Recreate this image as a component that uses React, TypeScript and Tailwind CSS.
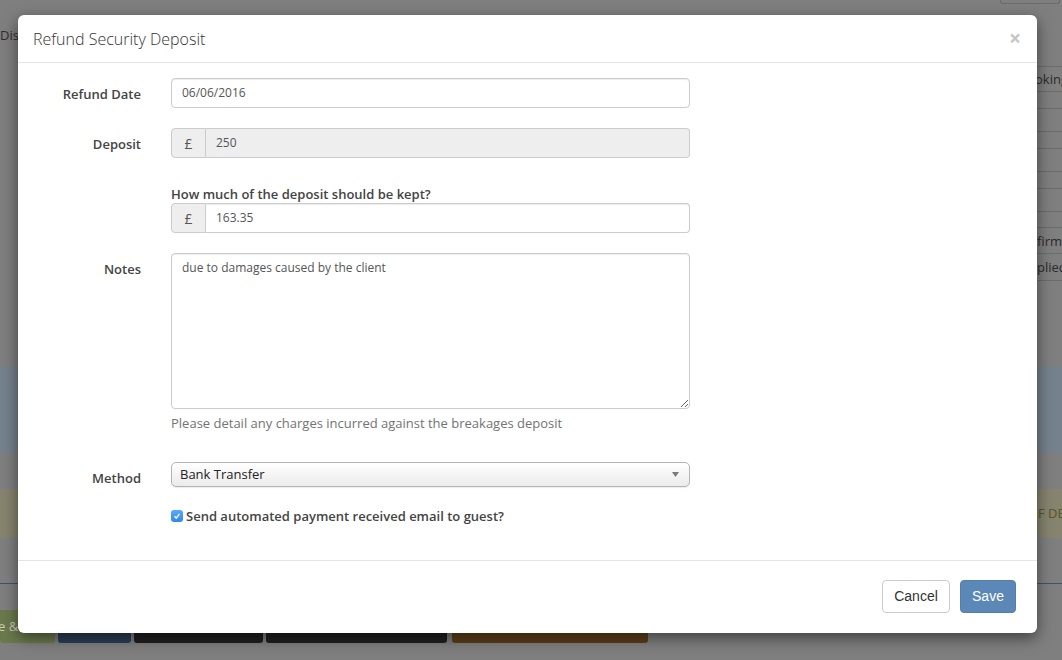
// RefundDepositModal — "Refund Security Deposit" dialog over a dimmed booking page

const sans = "font-['Open_Sans','Noto_Sans',sans-serif]";

function FieldLabel({ children, className = '' }: { children?: React.ReactNode; className?: string }) {
  return (
    <div className={`w-[123px] shrink-0 text-right text-[13px] font-semibold leading-[18px] text-[#444] ${className}`}>
      {children}
    </div>
  );
}

function PoundGroup({ value, disabled }: { value: string; disabled?: boolean }) {
  return (
    <div className="flex h-[30px] w-[519px]">
      <span className="flex w-[35px] items-center justify-center rounded-l-[4px] border border-[#ccc] bg-[#eee] text-[14px] text-[#555]">
        £
      </span>
      <div
        className={`flex flex-1 items-center rounded-r-[4px] border border-l-0 border-[#ccc] px-[10px] text-[12px] text-[#555]
                    ${disabled ? 'bg-[#eee]' : 'bg-white shadow-[inset_0_1px_1px_rgba(0,0,0,0.075)]'}`}
      >
        {value}
      </div>
    </div>
  );
}

function BackgroundPage() {
  return (
    <div className="flex h-full flex-col">
      {/* top strip */}
      <div className="flex h-[60px] flex-col">
        <div className="flex justify-end pr-[2px]">
          <div className="h-[4px] w-[60px] rounded-b-[3px] border border-t-0 border-[#6b6b6b]" />
        </div>
        <div className="mt-[22px] text-[13px] leading-[18px] text-[#2e2e2e]">Disa</div>
      </div>

      {/* right-hand table peeking past the dialog */}
      <div className="flex h-[307px] justify-end">
        <div className="flex w-[27px] flex-col pt-[6px] text-[13px] leading-[18px] text-[#2b2b2b]">
          <div className="flex h-[26px] items-center border-y border-[#6c6c6c]">oking</div>
          <div className="mt-[16px] h-[24px] border-y border-[#6c6c6c]" />
          <div className="mt-[16px] h-[24px] border-y border-[#6c6c6c]" />
          <div className="mt-[16px] h-[24px] border-y border-[#6c6c6c]" />
          <div className="mt-[15px] flex h-[27px] items-center border-y border-[#6c6c6c] pl-[2px]">firm</div>
          <div className="flex h-[27px] items-center border-b border-[#6c6c6c] pl-[2px]">plied</div>
        </div>
      </div>

      <div className="h-[86px] bg-[#75818c]" />
      <div className="h-[36px]" />
      <div className="flex h-[49px] items-center justify-end bg-[#86836f] text-[13px] text-[#5d5526]">
        <span className="w-[24px] overflow-hidden whitespace-nowrap">F DEL</span>
      </div>
      <div className="h-[46px] border-b border-[#3d5573]" />
      <div className="h-[26px]" />

      {/* button bar */}
      <div className="flex h-[33px]">
        <div className="flex w-[55px] items-center rounded-b-[3px] bg-[#6a7a4c] text-[13px] text-[#c9cfbd]">
          <span className="-ml-[2px]">e &amp;</span>
        </div>
        <div className="ml-[3px] w-[73px] rounded-b-[3px] bg-[#2c3f57]" />
        <div className="ml-[3px] w-[129px] rounded-b-[3px] bg-[#202020]" />
        <div className="ml-[3px] w-[181px] rounded-b-[3px] bg-[#202020]" />
        <div className="ml-[5px] w-[196px] rounded-b-[3px] bg-gradient-to-b from-[#6f4d1f] to-[#5a3d17]" />
      </div>
    </div>
  );
}

export default function App() {
  return (
    <div className={`relative h-[660px] w-[1062px] overflow-hidden bg-[#7f7f7f] ${sans}`}>
      <BackgroundPage />

      {/* ── Dialog ─────────────────────────────────────────── */}
      <div className="absolute left-[18px] top-[15px] flex h-[618px] w-[1019px] flex-col rounded-[6px] bg-white shadow-[0_5px_15px_rgba(0,0,0,0.5)]">
        {/* Header */}
        <div className="flex h-[48px] shrink-0 items-center justify-between border-b border-[#e5e5e5] pl-[15px] pr-[16px]">
          <h4 className="text-[16px] font-light text-[#333]">Refund Security Deposit</h4>
          <span className="text-[21px] font-bold leading-none text-[#c6c6c6]">×</span>
        </div>

        {/* Body */}
        <div className="h-[497px] shrink-0 pt-[15px]">
          {/* Refund date */}
          <div className="flex">
            <FieldLabel className="pt-[7px]">Refund Date</FieldLabel>
            <div className="ml-[30px] flex h-[30px] w-[519px] items-center rounded-[4px] border border-[#ccc] px-[10px] text-[12px] text-[#555] shadow-[inset_0_1px_1px_rgba(0,0,0,0.075)]">
              06/06/2016
            </div>
          </div>

          {/* Deposit */}
          <div className="mt-[20px] flex">
            <FieldLabel className="pt-[7px]">Deposit</FieldLabel>
            <div className="ml-[30px]">
              <PoundGroup value="250" disabled />
            </div>
          </div>

          {/* Kept amount */}
          <div className="mt-[27px] flex">
            <FieldLabel />
            <div className="ml-[30px]">
              <p className="text-[13px] font-semibold leading-[18px] text-[#444]">How much of the deposit should be kept?</p>
              <PoundGroup value="163.35" />
            </div>
          </div>

          {/* Notes */}
          <div className="mt-[20px] flex">
            <FieldLabel className="pt-[7px]">Notes</FieldLabel>
            <div className="ml-[30px] w-[519px]">
              <textarea
                readOnly
                defaultValue="due to damages caused by the client"
                className="block h-[156px] w-full rounded-[4px] border border-[#ccc] px-[10px] py-[5px] text-[12px] leading-[18px] text-[#555] shadow-[inset_0_1px_1px_rgba(0,0,0,0.075)] outline-none"
              />
              <p className="mt-[5px] text-[13px] leading-[18px] text-[#737373]">
                Please detail any charges incurred against the breakages deposit
              </p>
            </div>
          </div>

          {/* Method */}
          <div className="mt-[30px] flex">
            <FieldLabel className="pt-[7px]">Method</FieldLabel>
            <div className="ml-[30px] flex h-[25px] w-[519px] items-center justify-between rounded-[5px] border border-[#b4b4b4] bg-gradient-to-b from-white to-[#ebebeb] pl-[8px] pr-[10px] text-[13px] text-[#222] shadow-[0_1px_1px_rgba(0,0,0,0.08)]">
              <span>Bank Transfer</span>
              <svg width="7" height="5" viewBox="0 0 7 5" className="fill-[#7a7a7a]">
                <path d="M0 0h7L3.5 5z" />
              </svg>
            </div>
          </div>

          {/* Email checkbox */}
          <div className="mt-[20px] flex">
            <FieldLabel />
            <label className="ml-[30px] flex items-center text-[13px] font-semibold leading-[18px] text-[#444]">
              <span className="mr-[3px] flex h-[12px] w-[12px] items-center justify-center rounded-[3px] bg-gradient-to-b from-[#5aa9fb] to-[#2f86ef]">
                <svg width="8" height="8" viewBox="0 0 8 8" fill="none" stroke="white" strokeWidth="1.4">
                  <path d="M1.5 4.3l1.7 1.8 3.3-4.2" />
                </svg>
              </span>
              Send automated payment received email to guest?
            </label>
          </div>
        </div>

        {/* Footer */}
        <div className="flex flex-1 items-start justify-end gap-[10px] border-t border-[#e5e5e5] pr-[21px] pt-[19px] font-['Liberation_Sans',Arial,sans-serif]">
          <button className="h-[33px] w-[68px] rounded-[4px] border border-[#ccc] bg-white text-[14px] text-[#333]">
            Cancel
          </button>
          <button className="h-[33px] w-[56px] rounded-[4px] border border-[#5280ad] bg-[#5b88b6] text-[14px] text-white">
            Save
          </button>
        </div>
      </div>
    </div>
  );
}
